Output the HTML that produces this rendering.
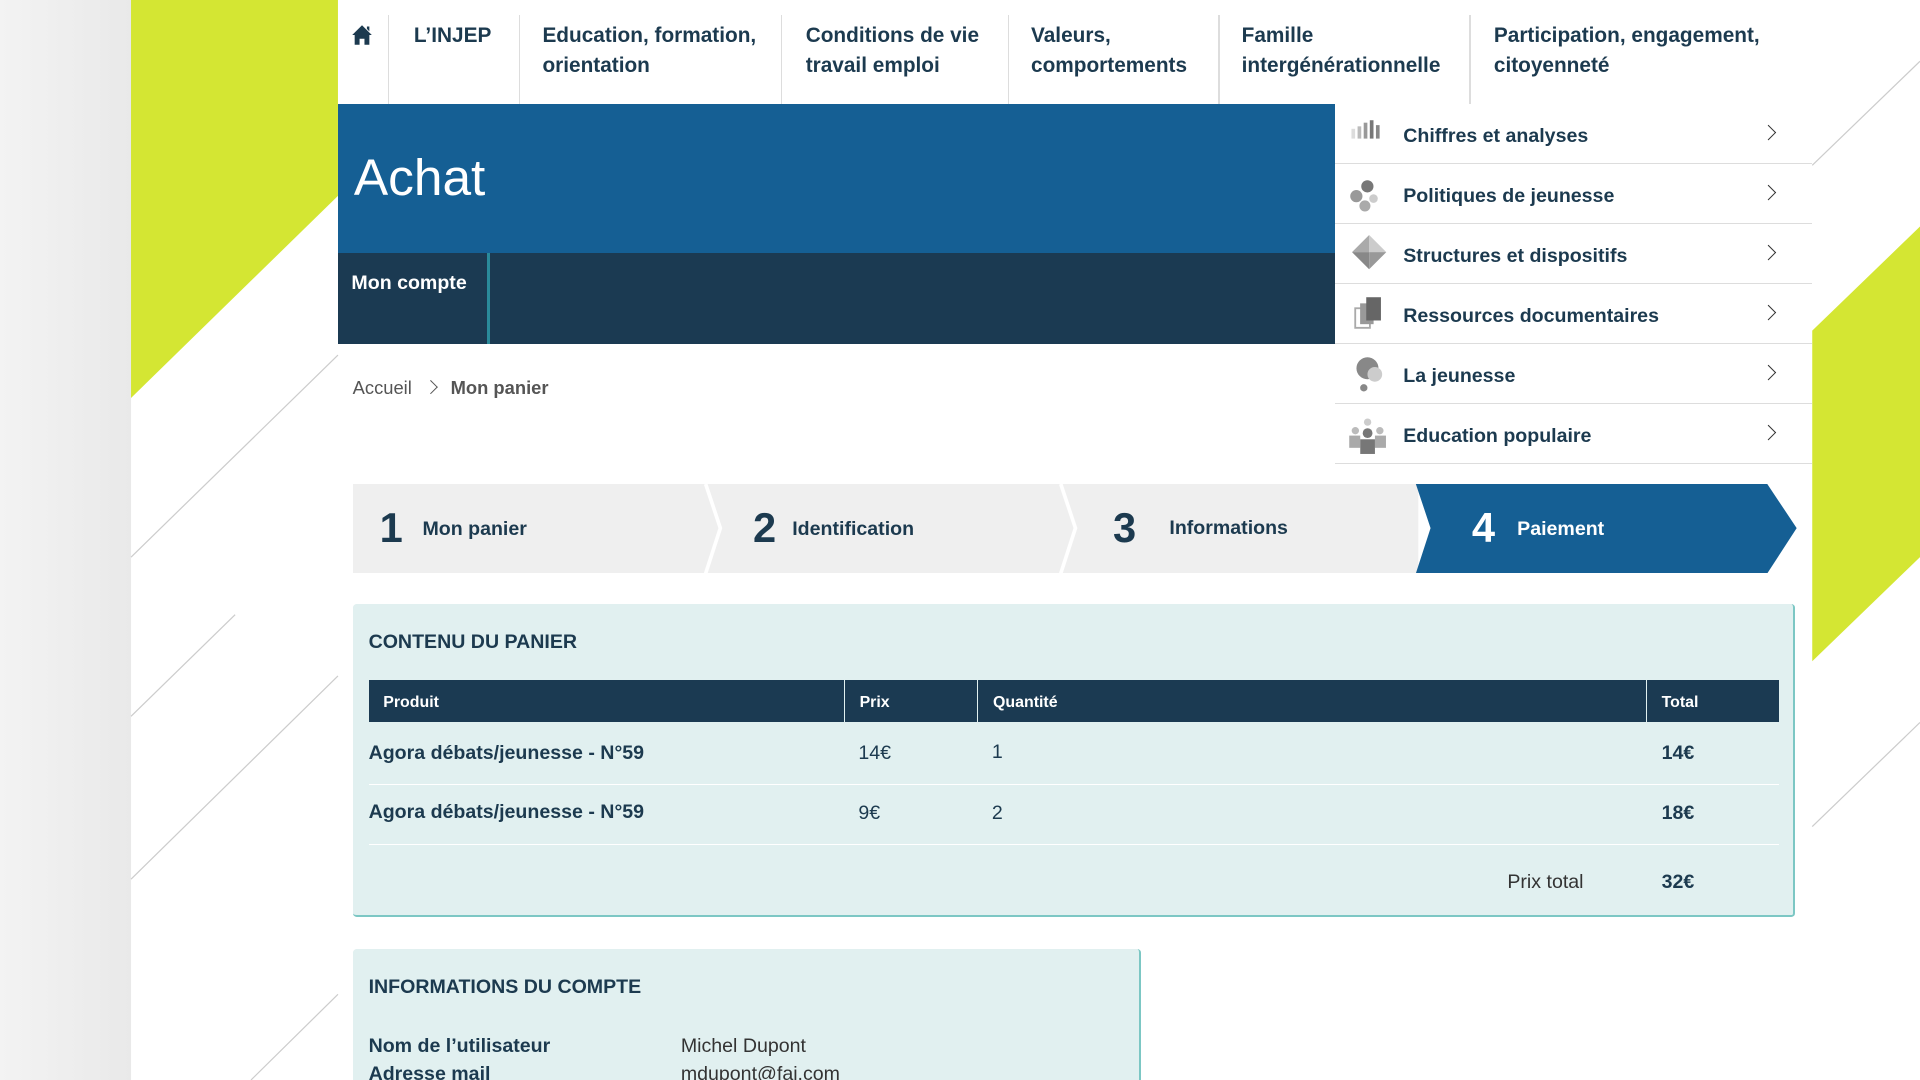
<!DOCTYPE html>
<html><head><meta charset="utf-8"><style>
html,body{margin:0;padding:0;width:1920px;height:1080px;overflow:hidden;background:#fff}
#w{position:relative;width:1568px;height:882px;zoom:1.224490;font-family:"Liberation Sans",sans-serif;color:#1c3a4f;overflow:hidden}
.a{position:absolute}
.nav{top:15px;height:71px;font-size:17px;font-weight:bold;line-height:25px;color:#1c3a4f;padding-top:2px}
.sep{top:12px;width:1px;height:73px;background:#ddd}
.side{left:1090px;width:390px;height:48px;border-bottom:1px solid #ddd;background:#fff}
.side span{position:absolute;left:56px;top:17px;font-size:16px;font-weight:bold}
.side i{position:absolute;left:350px;top:19px;width:8px;height:8px;border-right:1.5px solid #333;border-top:1.5px solid #333;transform:rotate(45deg)}
.side svg{position:absolute;left:12px;top:12px}
.num{font-size:34px;font-weight:bold;top:16px}
.lbl{font-size:16px;font-weight:bold;top:28px}
.panel{background:#e1f0f0;border-right:2px solid #7cc7c4;border-bottom:2px solid #7cc7c4;border-radius:3px}
h3{margin:0;position:absolute;font-size:16px;font-weight:bold}
.th{top:555px;height:35px;background:#1b3a52;color:#fff;font-size:13px;font-weight:bold;line-height:37px;padding-left:12px;box-sizing:border-box}
.td{font-size:16px}
</style></head><body><div id="w">
<svg class="a" style="left:0;top:0" width="1568" height="882">
<defs><linearGradient id="g" x1="0" x2="1"><stop offset="0" stop-color="#f3f3f3"/><stop offset="1" stop-color="#e9e9e9"/></linearGradient></defs>
<rect x="0" y="0" width="107" height="882" fill="url(#g)"/>
<polygon points="107,0 276,0 276,160 107,325" fill="#d4e633"/>
<polygon points="1480,270 1568,185 1568,455 1480,540" fill="#d4e633"/>
<g stroke="#ccc" stroke-width="1" fill="none">
<line x1="107" y1="455" x2="276" y2="290"/>
<line x1="107" y1="585" x2="192" y2="502"/>
<line x1="107" y1="718" x2="276" y2="552"/>
<line x1="205" y1="882" x2="276" y2="812"/>
<line x1="1480" y1="135" x2="1568" y2="50"/>
<line x1="1480" y1="675" x2="1568" y2="590"/>
</g></svg>
<svg class="a" style="left:287px;top:20px" width="18" height="18" viewBox="0 0 18 18"><path d="M9 1 L17 9 L15 9 L15 17 L11 17 L11 12 L7 12 L7 17 L3 17 L3 9 L1 9 Z M13 2 L15 2 L15 6 L13 4Z" fill="#1c3a4f"/></svg>
<div class="a sep" style="left:317px"></div><div class="a sep" style="left:424px"></div><div class="a sep" style="left:638px"></div><div class="a sep" style="left:823px"></div><div class="a sep" style="left:995px"></div><div class="a sep" style="left:1200px"></div>
<div class="a nav" style="left:338px">L’INJEP</div>
<div class="a nav" style="left:443px">Education, formation,<br>orientation</div>
<div class="a nav" style="left:658px">Conditions de vie<br>travail emploi</div>
<div class="a nav" style="left:842px">Valeurs,<br>comportements</div>
<div class="a nav" style="left:1014px">Famille<br>intergénérationnelle</div>
<div class="a nav" style="left:1220px">Participation, engagement,<br>citoyenneté</div>
<div class="a" style="left:276px;top:85px;width:814px;height:122px;background:#155f94"></div>
<div class="a" style="left:289px;top:120px;font-size:42px;color:#fff">Achat</div>
<div class="a" style="left:276px;top:207px;width:814px;height:74px;background:#1b3a52"></div>
<div class="a" style="left:398px;top:207px;width:2px;height:74px;background:#2a8a9a"></div>
<div class="a" style="left:287px;top:222px;font-size:16px;font-weight:bold;color:#fff">Mon compte</div>
<div class="a side" style="top:85px"><svg width="26" height="20"><rect x="2" y="8" width="3" height="8" fill="#ddd"/><rect x="7" y="6" width="3" height="10" fill="#bbb"/><rect x="12" y="3" width="3" height="13" fill="#999"/><rect x="17" y="1" width="3" height="15" fill="#777"/><rect x="22" y="5" width="3" height="11" fill="#888"/></svg><span>Chiffres et analyses</span><i></i></div>
<div class="a side" style="top:134px"><svg width="26" height="30"><circle cx="15" cy="6" r="5" fill="#777"/><circle cx="6" cy="14" r="5" fill="#999"/><circle cx="20" cy="16" r="3.5" fill="#ccc"/><circle cx="13" cy="22" r="4.5" fill="#aaa"/></svg><span>Politiques de jeunesse</span><i></i></div>
<div class="a side" style="top:183px"><svg width="30" height="30" style="left:14px;top:9px"><polygon points="14,0 28,14 14,14" fill="#ccc"/><polygon points="14,0 0,14 14,14" fill="#aaa"/><polygon points="0,14 14,14 14,28" fill="#888"/><polygon points="28,14 14,14 14,28" fill="#999"/></svg><span>Structures et dispositifs</span><i></i></div>
<div class="a side" style="top:232px"><svg width="26" height="30" style="left:16px;top:10px"><rect x="1" y="10" width="12" height="16" fill="none" stroke="#aaa" stroke-width="1.5"/><rect x="5" y="6" width="11" height="17" fill="#999"/><rect x="10" y="1" width="12" height="19" fill="#666"/></svg><span>Ressources documentaires</span><i></i></div>
<div class="a side" style="top:281px"><svg width="26" height="32" style="left:16px;top:10px"><circle cx="11" cy="10" r="9" fill="#888"/><circle cx="17" cy="15" r="6" fill="#ccc"/><circle cx="8" cy="26" r="3" fill="#888"/></svg><span>La jeunesse</span><i></i></div>
<div class="a side" style="top:330px"><svg width="32" height="32" style="left:11px;top:10px"><circle cx="6" cy="12" r="3" fill="#bbb"/><circle cx="26" cy="12" r="3" fill="#bbb"/><circle cx="16" cy="5" r="3" fill="#ccc"/><rect x="1" y="16" width="9" height="10" fill="#aaa"/><rect x="22" y="16" width="9" height="10" fill="#aaa"/><circle cx="16" cy="14" r="4" fill="#777"/><rect x="10" y="19" width="12" height="12" fill="#777"/></svg><span>Education populaire</span><i></i></div>
<div class="a" style="left:288px;top:308px;font-size:15px;color:#555">Accueil</div>
<div class="a" style="left:348px;top:312px;width:7px;height:7px;border-right:1.5px solid #555;border-top:1.5px solid #555;transform:rotate(45deg)"></div>
<div class="a" style="left:368px;top:308px;font-size:15px;font-weight:bold;color:#555">Mon panier</div>
<svg class="a" style="left:288px;top:395px" width="1182" height="73">
<rect x="0" y="0" width="870" height="73" fill="#efefef"/>
<polyline points="288,0 300,36 288,73" stroke="#fff" stroke-width="3" fill="none"/>
<polyline points="578,0 590,36 578,73" stroke="#fff" stroke-width="3" fill="none"/>
<polygon points="868,0 1155,0 1179,36 1155,73 868,73 880,36" fill="#155f94"/>
</svg>
<div class="a num" style="left:310px;top:412px">1</div><div class="a lbl" style="left:345px;top:423px">Mon panier</div>
<div class="a num" style="left:615px;top:412px">2</div><div class="a lbl" style="left:647px;top:423px">Identification</div>
<div class="a num" style="left:909px;top:412px">3</div><div class="a lbl" style="left:955px;top:422px">Informations</div>
<div class="a num" style="left:1202px;top:412px;color:#fff">4</div><div class="a lbl" style="left:1239px;top:423px;color:#fff">Paiement</div>
<div class="a panel" style="left:288px;top:493px;width:1176px;height:254px"></div>
<h3 style="left:301px;top:515px">CONTENU DU PANIER</h3>
<div class="a th" style="left:301px;width:388px">Produit</div>
<div class="a th" style="left:690px;width:108px">Prix</div>
<div class="a th" style="left:799px;width:545px">Quantité</div>
<div class="a th" style="left:1345px;width:108px">Total</div>
<div class="a td" style="left:301px;top:606px;font-weight:bold">Agora débats/jeunesse - N°59</div>
<div class="a td" style="left:701px;top:606px">14€</div><div class="a td" style="left:810px;top:605px">1</div><div class="a td" style="left:1357px;top:606px;font-weight:bold">14€</div>
<div class="a" style="left:301px;top:640px;width:1152px;height:1px;background:#fff"></div>
<div class="a td" style="left:301px;top:654px;font-weight:bold">Agora débats/jeunesse - N°59</div>
<div class="a td" style="left:701px;top:655px">9€</div><div class="a td" style="left:810px;top:655px">2</div><div class="a td" style="left:1357px;top:655px;font-weight:bold">18€</div>
<div class="a" style="left:301px;top:689px;width:1152px;height:1px;background:#fff"></div>
<div class="a td" style="left:1231px;top:711px;color:#333">Prix total</div>
<div class="a td" style="left:1357px;top:711px;font-weight:bold">32€</div>
<div class="a panel" style="left:288px;top:775px;width:642px;height:130px;border-bottom:none"></div>
<h3 style="left:301px;top:797px">INFORMATIONS DU COMPTE</h3>
<div class="a td" style="left:301px;top:845px;font-weight:bold">Nom de l’utilisateur</div>
<div class="a td" style="left:556px;top:845px;color:#333">Michel Dupont</div>
<div class="a td" style="left:301px;top:868px;font-weight:bold">Adresse mail</div>
<div class="a td" style="left:556px;top:868px;color:#333">mdupont@fai.com</div>
</div></body></html>
